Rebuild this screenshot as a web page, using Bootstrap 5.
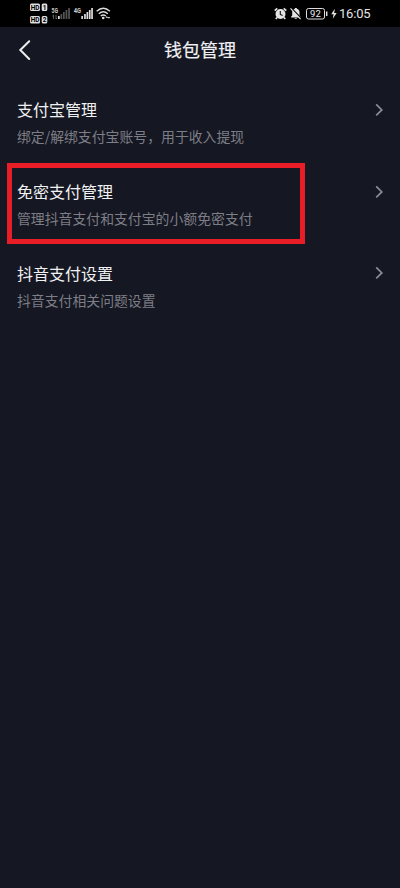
<!DOCTYPE html>
<html lang="zh-CN">
<head>
<meta charset="utf-8">
<meta name="viewport" content="width=device-width, initial-scale=1">
<title>钱包管理</title>
<link href="https://cdn.jsdelivr.net/npm/bootstrap@5.3.0/dist/css/bootstrap.min.css" rel="stylesheet">
<style>
body{background:#151722;color:#f1f1f3;font-family:"Noto Sans CJK SC",sans-serif;min-height:888px;overflow:hidden}
.status{height:27px;background:#000;padding:0 29px 0 28px}
.status svg text{font-family:Roboto,sans-serif}
.clock{font:400 13px/28px Roboto,sans-serif;letter-spacing:-.2px;color:#e4e4e4;width:32px;white-space:nowrap}
.topbar{height:46px;padding:0 17px}
.topbar h1{font-size:18px;line-height:44px;font-weight:400;padding-bottom:2px;-webkit-text-stroke:.2px #f1f1f3}
.side{width:16px}
.entries{padding-top:23.4px}
.entry{height:81.6px;padding:0 16px 0 17px}
.entry-title{font-size:16px;line-height:27px}
.entry-note{font-size:13.86px;line-height:27px;color:#7d7e86;white-space:nowrap}
.chev{margin-top:6.6px}
.highlight{left:-10px;top:-15px;width:298px;height:81px;border:5px solid #e91d25;pointer-events:none}
</style>
</head>
<body>
<header class="status d-flex justify-content-between">
<svg width="90" height="27" viewBox="28 0 90 27">
<g fill="#dedede"><rect x="30" y="3.5" width="10" height="7.5" rx="1.5"/><rect x="41.7" y="3.5" width="5.6" height="7.5" rx="1.5"/><rect x="30" y="16" width="10" height="7.5" rx="1.5"/><rect x="41.7" y="16" width="5.6" height="7.5" rx="1.5"/></g>
<g font-size="6.5" font-weight="700" fill="#000"><text x="30.7" y="9.6">HD</text><text x="42.7" y="9.6">1</text><text x="30.7" y="22.1">HD</text><text x="42.7" y="22.1">2</text></g>
<g font-size="6.5" font-weight="700" fill="#ccc"><text x="51.5" y="12.5" textLength="6.5" lengthAdjust="spacingAndGlyphs">5G</text><text x="73.7" y="12.5" textLength="7.3" lengthAdjust="spacingAndGlyphs">4G</text></g>
<path d="M53.5 19v-4m-1.2 1.2 1.2-1.2M56 15v4m1.2-1.2L56 19" stroke="#777" fill="none" stroke-width=".8"/>
<g fill="#ddd"><path d="M58 16h1.7v3H58zM81.3 16H83v3h-1.7zM84.1 14h1.7v5h-1.7zM86.5 12h1.7v7h-1.7zM88.9 10h1.7v9h-1.7zM91.2 8h1.7v11h-1.7z"/></g>
<path d="M60.5 14h1.7v5h-1.7zM63 12h1.7v7H63zM65.6 10h1.7v9h-1.7zM68.2 8h1.7v11h-1.7z" fill="#555"/>
<g fill="none" stroke="#ddd" stroke-width="1.5"><path d="M96.7 11.3q6.6-6 13.2 0M98.8 13.7q4.5-4 9 0M100.8 16q2.5-2.1 5 0"/></g><circle cx="103.2" cy="18" r="1.3" fill="#ddd"/><path d="m105.5 17.8 1.3-1.7 1.3 1.7zM107.5 17l1.4 1.7 1.3-1.7z" fill="#ddd"/>
</svg>
<div class="d-flex">
<svg width="66" height="27" viewBox="273 0 66 27">
<circle cx="280.5" cy="14" r="5" fill="#e4e4e4"/><path d="m274.7 10.6 2.6-2.3m9 2.3-2.6-2.3M277 17.5l-1.2 1.6m8.2-1.6 1.2 1.6" stroke="#e4e4e4" stroke-width="1.7"/><path d="M280.3 11v3.4l2.3 1.2" fill="none" stroke="#111" stroke-width="1.1"/>
<path d="M291.2 17.5v-1l1-1v-3q0-3 2.7-3.7v-.9h1.9v.9q2.7.7 2.7 3.7v3l1 1v1zM294.4 18.2h2.8q-1.4 1.7-2.8 0" fill="#e4e4e4"/><path d="m291.3 7.9 9.8 10.4" stroke="#000" stroke-width="1.4"/><path d="m290.5 8.4 10.1 10.8" stroke="#e4e4e4" stroke-width="1.2"/>
<rect x="306.5" y="8.5" width="18" height="10.5" rx="2" fill="none" stroke="#ddd"/><path d="M326.7 11.5v4.5" stroke="#ddd" stroke-width="1.5"/><text x="315.4" y="17.2" text-anchor="middle" font-size="9.5" fill="#eee">92</text>
<path d="m334.8 8.8-3.6 5.5h2.4l-.8 4.5 3.9-5.9h-2.5z" fill="#e4e4e4"/>
</svg>
<span class="clock">16:05</span>
</div>
</header>
<nav class="topbar d-flex align-items-center justify-content-between">
<svg class="side" height="24" viewBox="0 0 16 24"><path d="M12.2 3.2 3.3 12l8.9 9" fill="none" stroke="#eee" stroke-width="2" stroke-linecap="round"/></svg>
<h1 class="m-0">钱包管理</h1>
<span class="side"></span>
</nav>
<main class="entries">
<section class="entry d-flex justify-content-between align-items-start">
<div><div class="entry-title">支付宝管理</div><div class="entry-note">绑定/解绑支付宝账号，用于收入提现</div></div>
<svg class="chev" width="10" height="14" viewBox="0 0 10 14"><path d="m2.2 1.4 5.6 5.5-5.6 5.5" fill="none" stroke="#8b8c94" stroke-width="1.7"/></svg>
</section>
<section class="entry d-flex justify-content-between align-items-start">
<div class="position-relative"><div class="entry-title">免密支付管理</div><div class="entry-note">管理抖音支付和支付宝的小额免密支付</div><div class="highlight position-absolute"></div></div>
<svg class="chev" width="10" height="14" viewBox="0 0 10 14"><path d="m2.2 1.4 5.6 5.5-5.6 5.5" fill="none" stroke="#8b8c94" stroke-width="1.7"/></svg>
</section>
<section class="entry d-flex justify-content-between align-items-start">
<div><div class="entry-title">抖音支付设置</div><div class="entry-note">抖音支付相关问题设置</div></div>
<svg class="chev" width="10" height="14" viewBox="0 0 10 14"><path d="m2.2 1.4 5.6 5.5-5.6 5.5" fill="none" stroke="#8b8c94" stroke-width="1.7"/></svg>
</section>
</main>
<script src="https://cdn.jsdelivr.net/npm/bootstrap@5.3.0/dist/js/bootstrap.bundle.min.js"></script>
</body>
</html>
